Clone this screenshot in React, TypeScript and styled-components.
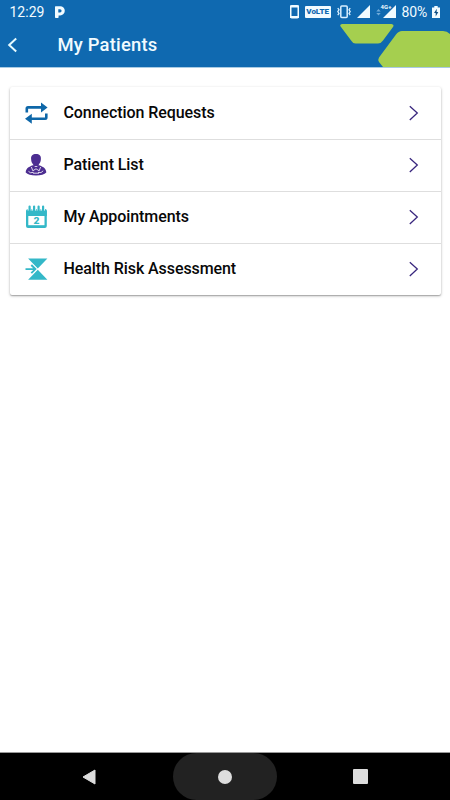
import React from 'react';
import styled, { createGlobalStyle } from 'styled-components';

const GlobalStyle = createGlobalStyle`
  * { box-sizing: border-box; }
  body { margin: 0; background: #fff; font-family: Roboto, sans-serif; }
  svg { display: block; flex: none; }
`;

const Screen = styled.div`
  display: flex;
  flex-direction: column;
  width: 450px;
  height: 800px;
  overflow: hidden;
  background: #fff;
`;

const Header = styled.header`
  position: relative;
  height: 67px;
  flex: none;
  background: #0f69b0;
  color: #f1fbff;
  box-shadow: 0 1px 0 #a9cbe3;
`;

const HeaderArt = styled.svg`
  position: absolute;
  top: 0;
  right: 0;
`;

const StatusBar = styled.div`
  position: relative;
  display: flex;
  align-items: center;
  justify-content: space-between;
  height: 24px;
  padding: 0 10px 0 9.5px;
`;

const StatusGroup = styled.div<{ $gap: number }>`
  display: flex;
  align-items: center;
  height: 24px;
  gap: ${(p) => p.$gap}px;
`;

const StatusText = styled.span<{ $spacing: number }>`
  font-size: 14px;
  line-height: 25px;
  letter-spacing: ${(p) => p.$spacing}px;
  white-space: nowrap;
`;

const VolteBadge = styled.span`
  display: flex;
  align-items: center;
  justify-content: center;
  width: 26px;
  height: 12px;
  border-radius: 1px;
  background: #f1fbff;
  color: #0f69b0;
  font: 900 8px/12px Roboto, sans-serif;
`;

const TitleBar = styled.div`
  position: relative;
  display: flex;
  align-items: center;
  height: 42px;
  padding-left: 7px;
`;

const BackButton = styled.button`
  width: 50.5px;
  padding: 0;
  border: 0;
  background: none;
  color: inherit;
`;

const Title = styled.h1`
  margin: 0;
  font-size: 18.4px;
  line-height: 42px;
  font-weight: 500;
  letter-spacing: 0.2px;
`;

const Content = styled.main`
  flex: 1;
  padding: 19.5px 9.5px 0 10px;
`;

const Card = styled.ul`
  margin: 0;
  padding: 0;
  list-style: none;
  background: #fff;
  border-radius: 2px;
  box-shadow: 0 1px 3px rgba(0, 0, 0, 0.28), 0 1px 1px rgba(0, 0, 0, 0.18);
`;

const Row = styled.li`
  display: flex;
  align-items: center;
  height: 52.2px;
  padding: 0 22px 0 13px;
  & + & { border-top: 1px solid #dedede; padding-bottom: 0.6px; }
`;

const Label = styled.span`
  flex: 1;
  padding-left: 14.5px;
  color: #080808;
  font-size: 16px;
  line-height: 24px;
  font-weight: 500;
  letter-spacing: -0.08px;
`;

const NavBar = styled.nav`
  display: grid;
  grid-template-columns: 173px 104px 173px;
  align-items: center;
  flex: none;
  height: 48px;
  border-top: 1px solid #999;
  background: #000;
`;

const NavButton = styled.button<{ $pill?: boolean; $shift?: number }>`
  display: flex;
  align-items: center;
  justify-content: center;
  height: 47px;
  padding: 0 ${(p) => Math.max(-(p.$shift ?? 0), 0)}px 0 ${(p) => Math.max(p.$shift ?? 0, 0)}px;
  border: 0;
  border-radius: ${(p) => (p.$pill ? '24px' : '0')};
  background: ${(p) => (p.$pill ? '#222' : 'transparent')};
`;

const ParkingIcon = () => (
  <svg width="12" height="24" viewBox="0 0 12 24">
    <path
      fillRule="evenodd"
      fill="#f1fbff"
      d="M1.6 6.2H6.2A4.6 4.6 0 0 1 6.2 15.4H4.6V17.2Q4.6 18 3.8 18H1.8Q1 18 1 17.2V6.8Q1 6.2 1.6 6.2zM4.3 9.2V12.4H6A1.6 1.6 0 0 0 6 9.2z"
    />
  </svg>
);

const PhoneIcon = () => (
  <svg width="9" height="24" viewBox="0 0 9 24">
    <rect x="0.75" y="5.7" width="7.5" height="12" rx="1" fill="none" stroke="#f1fbff" strokeWidth="1.5" />
    <path d="M0 5.5h9v2H0zM0 16h9v2H0z" fill="#f1fbff" />
  </svg>
);

const VibrateIcon = () => (
  <svg width="14" height="24" viewBox="0 0 14 24" fill="none" stroke="#d9efff">
    <rect x="3.8" y="6" width="6.4" height="11.6" rx="1" strokeWidth="1.5" />
    <path d="M0.8 8l1.2 1.8-1.2 1.8L2 13.4 0.8 15.2M13.2 8L12 9.8l1.2 1.8-1.2 1.8 1.2 1.8" strokeWidth="1.3" />
  </svg>
);

const SignalIcon = () => (
  <svg width="13" height="24" viewBox="0 0 13 24">
    <path d="M13 5v13H0z" fill="#f1fbff" />
  </svg>
);

const Lte = styled.span`
  display: block;
  position: relative;
  width: 15px;
  height: 24px;
  padding-left: 2px;
`;

const LteTag = styled.span`
  position: absolute;
  left: 0;
  top: 4px;
  background: #0f69b0;
  font: 700 6px/6px Roboto, sans-serif;
`;

const Direction = () => (
  <svg width="5" height="24" viewBox="0 0 5 24" fill="#6faad9">
    <path d="M0.3 11.6L2.5 9 4.7 11.6zM0.3 13L2.5 15.6 4.7 13z" />
  </svg>
);

const BatteryIcon = () => (
  <svg width="8" height="24" viewBox="0 0 8 24">
    <path d="M2.3 6h3.4v1.5H8V18H0V7.5h2.3z" fill="#f1fbff" />
    <path d="M4.8 8.7L2 13h1.7v3.6L6.3 12H4.6z" fill="#0b4c83" />
  </svg>
);

const RequestsIcon = () => (
  <svg width="26" height="26" viewBox="0 0 26 26">
    <path d="M3.8 12.4V8.6Q3.8 7.4 5 7.4H18" fill="none" stroke="#0e67a8" strokeWidth="2.6" />
    <path d="M18 2.5L24.6 7.4 18 12.4zM8.8 13.7L2 18.7l6.8 5z" fill="#0e67a8" />
    <path d="M23.3 13.5v4Q23.3 18.7 22.1 18.7H8" fill="none" stroke="#0e67a8" strokeWidth="2.6" />
  </svg>
);

const PatientIcon = () => (
  <svg width="26" height="26" viewBox="0 0 26 26">
    <path d="M8.1 7C7.8 3.6 9.7 2 13 2s5.2 1.6 4.9 5c-.1 3-1.2 4.5-2.1 5.4V14h-5.6v-1.6C9.2 11.4 8.2 10 8.1 7z" fill="#4c2d91" />
    <path d="M9.5 13.2C5.2 15.3 3 16.2 2.7 20.5 4.5 22.6 8 23.5 13 23.5s8.5-.9 10.3-3C23 16.2 20.8 15.3 16.5 13.2L13 15z" fill="#4c2d91" />
    <path d="M8.4 15l1.4 3.8 3.2-2 3.2 2 1.4-3.8M5.5 19.4l2 1.3 3-.3M15 20.4l3 .2 2.2-1.8" fill="none" stroke="#fff" strokeWidth="0.8" strokeLinejoin="round" />
    <path d="M10 21.2h6" stroke="#fff" strokeWidth=".8" />
  </svg>
);

const CalendarDigit = styled.text`
  font: 900 9px Roboto, sans-serif;
  fill: #34b8c8;
`;

const CalendarIcon = () => (
  <svg width="26" height="26" viewBox="0 0 26 26">
    <path d="M5.5 5H22q1.8 0 1.8 1.8V22q0 2-2 2H5q-2 0-2-2V7q0-2 2.5-2z" fill="#34b8c8" />
    <path d="M5.3 12H21.5v9.2H5.3z" fill="#fff" />
    <path d="M6.6 1.8V7M11.1 1.8V7M15.6 1.8V7M20.1 1.8V7" stroke="#fff" strokeWidth="3.8" />
    <path d="M6.6 2.5V7M11.1 2.5V7M15.6 2.5V7M20.1 2.5V7" stroke="#34b8c8" strokeWidth="2.2" strokeLinecap="round" />
    <path d="M3 6.6h20.8V12H3z" fill="#34b8c8" />
    <CalendarDigit x="13.4" y="20" textAnchor="middle" textLength="6" lengthAdjust="spacingAndGlyphs">2</CalendarDigit>
  </svg>
);

const RiskIcon = () => (
  <svg width="26" height="26" viewBox="0 0 26 26">
    <path d="M5.1 2.5H24.4L14.8 12.5zM5.1 23.7H24.4L14.8 13.8z" fill="#34b8c8" />
    <path d="M2.5 13.1H12M8.3 9l4.1 4.1-4.1 4.1" fill="none" stroke="#fff" strokeWidth="3.4" />
    <path d="M2.5 13.1H12M8.3 9l4.1 4.1-4.1 4.1" fill="none" stroke="#34b8c8" strokeWidth="1.9" />
  </svg>
);

const Chevron = () => (
  <svg width="10" height="16" viewBox="0 0 10 16" fill="none">
    <path d="M0.8 1.2L8.3 8 0.8 15" stroke="#39277e" strokeWidth="1.3" />
  </svg>
);

const rows = [
  { label: 'Connection Requests', Icon: RequestsIcon },
  { label: 'Patient List', Icon: PatientIcon },
  { label: 'My Appointments', Icon: CalendarIcon },
  { label: 'Health Risk Assessment', Icon: RiskIcon },
];

export default function App() {
  return (
    <Screen>
      <GlobalStyle />
      <Header>
        <HeaderArt width="130" height="67" viewBox="320 0 130 67" fill="#a5cf4f">
          <path d="M342 24H391.5Q394.5 24.5 393 27L383 40.5Q381 43.5 378 43.5H355.5Q353 43.5 351.5 41L341 27Q339 24.5 342 24z" />
          <path d="M402 31H443Q447 31 450 34V67H383L379 62Q377.5 60 379 57.5L396 34.5Q398.5 31 402 31z" />
        </HeaderArt>
        <StatusBar>
          <StatusGroup $gap={10}>
            <StatusText $spacing={0}>12:29</StatusText>
            <ParkingIcon />
          </StatusGroup>
          <StatusGroup $gap={6}>
            <PhoneIcon />
            <VolteBadge>VoLTE</VolteBadge>
            <VibrateIcon />
            <SignalIcon />
            <StatusGroup $gap={0}>
              <Direction />
              <Lte>
                <SignalIcon />
                <LteTag>4G+</LteTag>
              </Lte>
            </StatusGroup>
            <StatusGroup $gap={5}>
              <StatusText $spacing={-0.2}>80%</StatusText>
              <BatteryIcon />
            </StatusGroup>
          </StatusGroup>
        </StatusBar>
        <TitleBar>
          <BackButton aria-label="Back">
            <svg width="12" height="18" viewBox="0 0 12 18" fill="none">
              <path d="M9.2 2.5L2.2 9l7 6.5" stroke="#e6fbff" strokeWidth="2" />
            </svg>
          </BackButton>
          <Title>My Patients</Title>
        </TitleBar>
      </Header>
      <Content>
        <Card>
          {rows.map(({ label, Icon }) => (
            <Row key={label}>
              <Icon />
              <Label>{label}</Label>
              <Chevron />
            </Row>
          ))}
        </Card>
      </Content>
      <NavBar>
        <NavButton aria-label="Back" $shift={5}>
          <svg width="14" height="16" viewBox="0 0 14 16">
            <path d="M13 1v14L1 8z" fill="#ddd" stroke="#ddd" strokeLinejoin="round" />
          </svg>
        </NavButton>
        <NavButton aria-label="Home" $pill>
          <svg width="14" height="14" viewBox="0 0 14 14">
            <circle cx="7" cy="7" r="7" fill="#ddd" />
          </svg>
        </NavButton>
        <NavButton aria-label="Recent apps" $shift={-7}>
          <svg width="15" height="15" viewBox="0 0 15 15">
            <rect width="15" height="15" rx="1" fill="#ddd" />
          </svg>
        </NavButton>
      </NavBar>
    </Screen>
  );
}
